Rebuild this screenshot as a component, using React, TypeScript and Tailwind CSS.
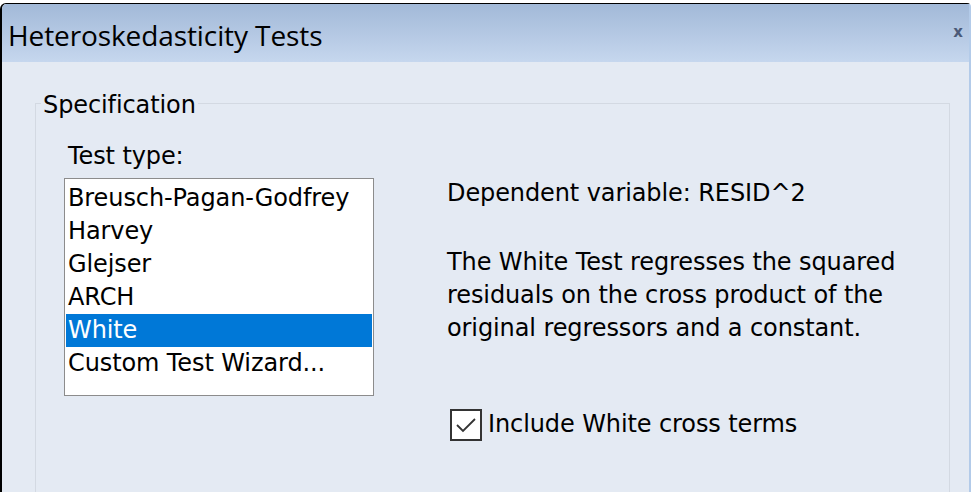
import React from "react";

const items = [
  "Breusch-Pagan-Godfrey",
  "Harvey",
  "Glejser",
  "ARCH",
  "White",
  "Custom Test Wizard...",
];

export default function App() {
  const body = { fontFamily: '"DejaVu Sans", Verdana, sans-serif' };
  return (
    <div className="w-[973px] h-[492px] overflow-hidden bg-white relative">
      <div className="absolute left-0 top-[3px] w-[971px] h-[489px] border-l-[2px] border-t-[1px] border-l-black border-t-black rounded-tl-[6px] rounded-tr-[4px] border-r-[2px] border-r-[#b3cbe9] bg-[#e4eaf3] flex flex-col">
        <div className="h-[58px] shrink-0 bg-gradient-to-b from-[#a2b9d8] to-[#c6d7ee] flex items-center justify-between pl-[6px] pr-[6px] rounded-tl-[5px]">
          <span
            className="text-[28px] text-black leading-none tracking-[-0.1px] mt-[4px]"
            style={{ fontFamily: '"Open Sans", "Noto Sans", sans-serif' }}
          >
            Heteroskedasticity Tests
          </span>
          <span className="text-[15px] font-bold text-[#4b5a78] leading-none mb-[2px]" style={body}>
            x
          </span>
        </div>
        <div className="flex-1 pl-[33px] pr-[19px] pt-[41px]" style={body}>
          <div className="relative h-full border border-[#d3d9e2] border-b-0 pl-[28px] pr-[20px] pt-[38px]">
            <span className="absolute left-[5px] top-[-13px] bg-[#e4eaf3] px-[2px] text-[24px] leading-[28px] text-black tracking-[-0.1px]">
              Specification
            </span>
            <div className="flex">
              <div className="flex flex-col w-[310px] shrink-0">
                <div className="text-[24px] leading-[28px] text-black pl-[4px] tracking-[-0.1px] mb-[8px]">Test type:</div>
                <div className="w-[310px] h-[218px] bg-white border border-[#8c8c8c] pt-[3px] px-[1px]">
                  {items.map((it) => (
                    <div
                      key={it}
                      className={`h-[33px] text-[24px] leading-[33px] pl-[2px] tracking-[-0.1px] ${
                        it === "White" ? "bg-[#0078d7] text-white" : "text-black"
                      }`}
                    >
                      {it}
                    </div>
                  ))}
                </div>
              </div>
              <div className="flex flex-col pl-[73px] pt-[35px] text-[24px] leading-[33px] tracking-[-0.1px] text-black">
                <div className="mb-[36px]">Dependent variable: RESID^2</div>
                <div className="w-[480px]">
                  The White Test regresses the squared
                  <br />
                  residuals on the cross product of the
                  <br />
                  original regressors and a constant.
                </div>
                <div className="flex items-center mt-[63px] ml-[3px]">
                  <div className="w-[32px] h-[32px] border-[2px] border-[#333333] bg-white flex items-center justify-center mr-[6px]">
                    <svg width="28" height="28" viewBox="0 0 28 28">
                      <path d="M5 14 L11 20 L23 8" fill="none" stroke="#333333" strokeWidth="1.8" />
                    </svg>
                  </div>
                  <span>Include White cross terms</span>
                </div>
              </div>
            </div>
          </div>
        </div>
      </div>
    </div>
  );
}
